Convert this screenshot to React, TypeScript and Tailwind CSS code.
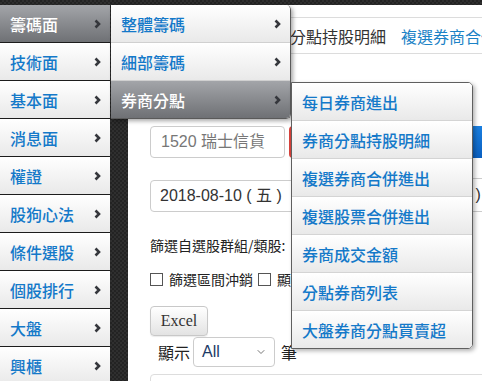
import { ChevronDown } from "lucide-react";

const mainMenu = [
  "籌碼面",
  "技術面",
  "基本面",
  "消息面",
  "權證",
  "股狗心法",
  "條件選股",
  "個股排行",
  "大盤",
  "興櫃",
];

const chipMenu = ["整體籌碼", "細部籌碼", "券商分點"];

const brokerMenu = [
  "每日券商進出",
  "券商分點持股明細",
  "複選券商合併進出",
  "複選股票合併進出",
  "券商成交金額",
  "分點券商列表",
  "大盤券商分點買賣超",
];

function Chevron({ className = "" }: { className?: string }) {
  return (
    <svg width="7" height="10" viewBox="0 0 7 10" className={className}>
      <path d="M1.5 1.5 L5 5 L1.5 8.5" fill="none" stroke="#35373c" strokeWidth="2.6" />
    </svg>
  );
}

function MenuItem({ label, active, arrow = true }: { label: string; active?: boolean; arrow?: boolean }) {
  return (
    <div
      className={
        "flex h-[37px] items-center justify-between pl-[10px] pr-[9px] text-[16px] leading-none font-medium " +
        (active
          ? "bg-linear-to-b from-[#a3a5a9] to-[#6f7175] text-white"
          : "bg-linear-to-b from-white to-[#e9e9e9] text-[#1479c9]")
      }
    >
      <span>{label}</span>
      {arrow && <Chevron />}
    </div>
  );
}

export default function App() {
  return (
    <div
      className="relative flex h-[381px] w-[482px] overflow-hidden bg-[#272727] bg-[image:repeating-conic-gradient(#2f2f2f_0_25%,#232323_0_50%)] bg-size-[4px_4px] pt-[5px]"
      style={{ fontFamily: '"Noto Sans CJK TC", "Liberation Sans", sans-serif' }}
    >
      {/* left menu */}
      <aside className="flex w-[110px] shrink-0 flex-col">
        {mainMenu.map((m, i) => (
          <div key={m} className="border-b border-[#1c1c1c]">
            <MenuItem label={m} active={i === 0} />
          </div>
        ))}
      </aside>

      {/* content */}
      <main className="ml-[18px] flex-1 bg-white pt-[12px] text-[#333]">
        <div className="flex h-[37px] items-center gap-[15px] border-y border-[#dcdcdc] pl-[19px] text-[16px] leading-none whitespace-nowrap">
          <span className="text-[#1a82c6]">每日券商進出</span>
          <span>券商分點持股明細</span>
          <span className="text-[#1a82c6]">複選券商合併進出</span>
        </div>

        <div className="mt-[72px] flex h-[32px] items-center pl-[22px]">
          <input
            placeholder="1520 瑞士信貨"
            className="h-[32px] w-[135px] rounded-[4px] border border-[#cccccc] px-[10px] text-[16px] placeholder:text-[#777]"
            style={{ fontFamily: '"Liberation Sans", "Noto Sans CJK TC", sans-serif' }}
          />
          <button className="ml-[4px] h-[32px] w-[60px] rounded-[4px] bg-[#d9433b] text-white">查詢</button>
          <button className="ml-[120px] h-[32px] w-[60px] rounded-[4px] bg-linear-to-b from-[#1a7fe0] to-[#0a5fc0] text-white">
            查詢
          </button>
        </div>

        <div className="mt-[20px] flex items-end pl-[22px]">
          <div
            className="flex h-[32px] w-[175px] items-center rounded-[4px] border border-[#cccccc] pl-[9px] text-[16px] whitespace-nowrap"
            style={{ fontFamily: '"Liberation Sans", "Noto Sans CJK TC", sans-serif' }}
          >
            2018-08-10 ( 五 )
          </div>
          <span className="mx-[6px] text-[16px]">~</span>
          <div
            className="flex h-[34px] w-[145px] items-center justify-end rounded-[4px] border border-[#cccccc] pr-[9px] text-[16px] whitespace-nowrap"
            style={{ fontFamily: '"Liberation Sans", "Noto Sans CJK TC", sans-serif' }}
          >
            2018-08-10 ( 五 )
          </div>
        </div>

        <div className="mt-[26px] pl-[22px] text-[14px] leading-none text-[#222]">篩選自選股群組/類股:</div>

        <div className="mt-[20px] flex items-center pl-[22px] text-[14px] leading-none text-[#222]">
          <span className="mr-[6px] h-[13px] w-[13px] border border-[#555] bg-white" />
          <span>篩選區間沖銷</span>
          <span className="mr-[6px] ml-[5px] h-[13px] w-[13px] border border-[#555] bg-white" />
          <span>顯示上市上櫃</span>
        </div>

        <div className="mt-[20px] pl-[22px]">
          <button
            className="h-[30px] w-[58px] rounded-[4px] border border-[#c8c8c8] bg-linear-to-b from-white to-[#e3e3e3] text-[16px] text-[#333] shadow-[0_1px_1px_rgba(0,0,0,0.08)]"
            style={{ fontFamily: '"Liberation Serif", serif' }}
          >
            Excel
          </button>
        </div>

        <div className="mt-[1px] flex items-center pl-[30px] text-[16px] text-[#222]">
          <span>顯示</span>
          <div className="ml-[3px] flex h-[30px] w-[82px] items-center justify-between rounded-[4px] border border-[#cccccc] pr-[7px] pl-[8px]">
            <span className="text-[#1c3a66]" style={{ fontFamily: '"Liberation Sans", sans-serif' }}>
              All
            </span>
            <ChevronDown size={12} strokeWidth={2} color="#777" />
          </div>
          <span className="ml-[6px]">筆</span>
        </div>

        <div className="mt-[7px] ml-[22px] h-[40px] rounded-tl-[4px] border border-[#dddddd]" />
      </main>

      {/* chip submenu */}
      <div className="absolute top-[5px] left-[111px] w-[180px] overflow-hidden rounded-r-[5px] border-r border-b border-[#5a5a5a] shadow-[2px_2px_4px_rgba(0,0,0,0.35)]">
        {chipMenu.map((m, i) => (
          <div key={m} className={i < chipMenu.length - 1 ? "border-b border-[#d0d0d0]" : ""}>
            <MenuItem label={m} active={i === 2} />
          </div>
        ))}
      </div>

      {/* broker submenu */}
      <div className="absolute top-[82px] left-[291px] w-[182px] overflow-hidden rounded-r-[5px] border border-[#5f5f5f] shadow-[2px_2px_4px_rgba(0,0,0,0.3)]">
        {brokerMenu.map((m, i) => (
          <div key={m} className={i < brokerMenu.length - 1 ? "border-b border-[#d4d4d4]" : ""}>
            <MenuItem label={m} arrow={false} />
          </div>
        ))}
      </div>
    </div>
  );
}
